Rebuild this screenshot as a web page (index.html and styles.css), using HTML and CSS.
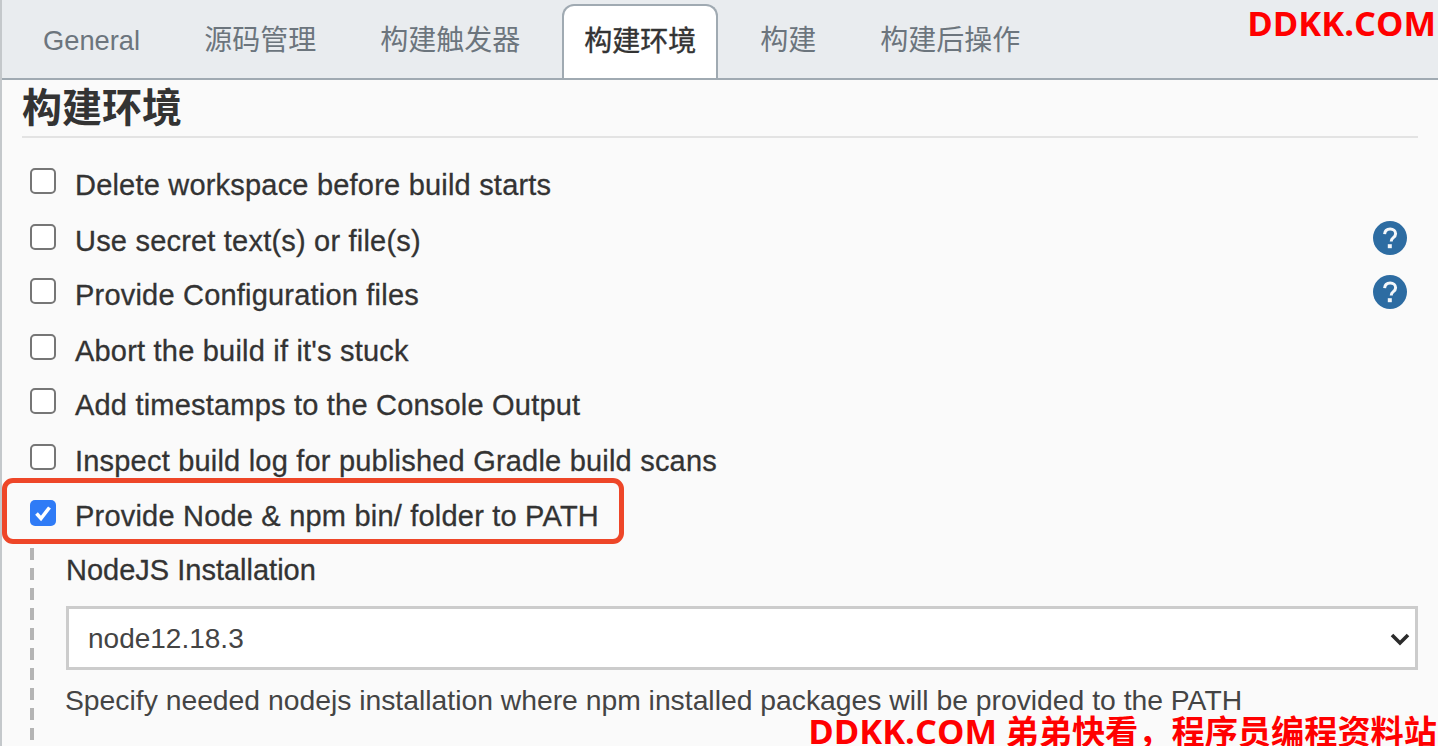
FILE: index.html
```html
<!DOCTYPE html>
<html lang="zh-CN">
<head>
    <meta charset="UTF-8">
    <title>构建环境</title>
    <link rel="stylesheet" href="styles.css">
</head>
<body>
    <div class="tabbar">
        <a class="tab tab-general">General</a>
        <a class="tab tab-scm">源码管理</a>
        <a class="tab tab-triggers">构建触发器</a>
        <a class="tab tab-active">构建环境</a>
        <a class="tab tab-build">构建</a>
        <a class="tab tab-post">构建后操作</a>
    </div>

    <div class="content">
        <h2 class="section-title">构建环境</h2>

        <div class="options">
            <label class="option"><input type="checkbox"><span>Delete workspace before build starts</span></label>
            <label class="option"><input type="checkbox"><span>Use secret text(s) or file(s)</span>
                <svg class="help" viewBox="0 0 34 34"><circle cx="17" cy="17" r="17" fill="#2d6ca2"/><path d="M11.6 13.2c.2-3.4 2.400-5.200 5.600-5.200 3.200 0 5.400 1.900 5.400 4.700 0 2-1 3.100-2.500 4.200-1.300 1-1.800 1.600-1.800 3v.6" fill="none" stroke="#f4f7fa" stroke-width="3"/><rect x="14.800" y="23.200" width="4" height="4" fill="#f4f7fa"/></svg>
            </label>
            <label class="option"><input type="checkbox"><span>Provide Configuration files</span>
                <svg class="help" viewBox="0 0 34 34"><circle cx="17" cy="17" r="17" fill="#2d6ca2"/><path d="M11.6 13.2c.2-3.4 2.400-5.200 5.600-5.200 3.200 0 5.400 1.900 5.400 4.700 0 2-1 3.100-2.500 4.200-1.300 1-1.800 1.600-1.800 3v.6" fill="none" stroke="#f4f7fa" stroke-width="3"/><rect x="14.800" y="23.200" width="4" height="4" fill="#f4f7fa"/></svg>
            </label>
            <label class="option"><input type="checkbox"><span>Abort the build if it's stuck</span></label>
            <label class="option"><input type="checkbox"><span>Add timestamps to the Console Output</span></label>
            <label class="option"><input type="checkbox"><span>Inspect build log for published Gradle build scans</span></label>
            <label class="option option-checked">
                <span class="checked-box"><svg viewBox="0 0 26 26"><path d="M6.500 13.500l4.500 5 8.500-11" fill="none" stroke="#fff" stroke-width="3.600"/></svg></span>
                <span>Provide Node &amp; npm bin/ folder to PATH</span>
                <span class="highlight"></span>
            </label>
        </div>

        <div class="nested">
            <div class="field-label">NodeJS Installation</div>
            <div class="select-wrap">
                <select class="field-select"><option>node12.18.3</option></select>
                <svg class="chevron" viewBox="0 0 20 14"><path d="M2 3l8 8 8-8" fill="none" stroke="#2b2b2b" stroke-width="3.600"/></svg>
            </div>
            <div class="field-help">Specify needed nodejs installation where npm installed packages will be provided to the PATH</div>
        </div>
    </div>

    <div class="watermark watermark-top">DDKK.COM</div>
    <div class="watermark watermark-bottom"><span class="watermark-latin">DDKK.COM</span> 弟弟快看，程序员编程资料站</div>
</body>
</html>
```

FILE: styles.css
```css
html, body {
    margin: 0;
    height: 100%;
    overflow: hidden;
}
body {
    position: relative;
    box-sizing: border-box;
    border-left: 2px solid #c4c8cb;
    background-color: #fafafa;
    color: #333;
    font-family: "Liberation Sans", "Noto Sans CJK SC", sans-serif;
}
.tabbar {
    display: flex;
    align-items: flex-end;
    box-sizing: border-box;
    height: 80px;
    padding-left: 41px;
    background-color: #e9ecef;
    border-bottom: 2px solid #a0aab2;
}
.tab {
    font-size: 28px;
    line-height: 74px;
    color: #6c757d;
}
.tab-general {
    margin-right: 64px;
    font-size: 27.300px;
}
.tab-scm { margin-right: 64px; }
.tab-triggers { margin-right: 42px; }
.tab-active {
    box-sizing: border-box;
    width: 156px;
    height: 74px;
    padding-left: 20px;
    line-height: 72px;
    color: #333;
    background-color: #fff;
    border: 2px solid #a0aab2;
    border-bottom: none;
    border-radius: 12px 12px 0 0;
    -webkit-text-stroke: 0.4px currentColor;
}
.tab-build { margin: 0 64px 0 42px; }
.content {
    padding: 0 20px;
}
.section-title {
    box-sizing: border-box;
    margin: 0;
    height: 58px;
    font-size: 40px;
    line-height: 56px;
    font-weight: 700;
    border-bottom: 2px solid #e3e3e3;
}
.options {
    padding-top: 20px;
}
.option {
    position: relative;
    display: flex;
    align-items: center;
    height: 55px;
    padding-left: 8px;
    font-size: 29px;
    letter-spacing: 0.2px;
    -webkit-text-stroke: 0.3px currentColor;
}
.option:nth-child(even) {
    margin: 1px 0 -1px;
}
.option-checked {
    margin-top: 1px;
}
.option input {
    appearance: none;
    box-sizing: border-box;
    width: 26px;
    height: 26px;
    margin: 0 19px 9px 0;
    background-color: #fff;
    border: 2px solid #767676;
    border-radius: 5px;
}
.checked-box {
    box-sizing: border-box;
    width: 26px;
    height: 26px;
    margin: 0 19px 8px 0;
    background-color: #2f7bf6;
    border-radius: 5px;
}
.checked-box svg {
    display: block;
}
.help {
    position: absolute;
    right: 11px;
    top: 7px;
    width: 34px;
    height: 34px;
}
.highlight {
    position: absolute;
    left: -20px;
    top: -11px;
    width: 622px;
    height: 66px;
    box-sizing: border-box;
    border: 5px solid #ee4628;
    border-radius: 11px;
}
.nested {
    margin: 4px 0 0 8px;
    padding-left: 36px;
    padding-bottom: 60px;
    background: repeating-linear-gradient(to bottom, #b4b4b4 0, #b4b4b4 12px, transparent 12px, transparent 20px) left top / 4px 100% no-repeat;
}
.field-label {
    height: 58px;
    font-size: 29px;
    line-height: 44px;
    -webkit-text-stroke: 0.3px currentColor;
}
.select-wrap {
    position: relative;
}
.field-select {
    appearance: none;
    display: block;
    box-sizing: border-box;
    width: 100%;
    height: 64px;
    padding: 0 19px;
    background-color: #fff;
    border: 3px solid #ccc;
    border-radius: 0;
    color: #444;
    font-family: inherit;
    font-size: 28px;
}
.chevron {
    position: absolute;
    right: 8px;
    top: 26px;
    width: 20px;
    height: 14px;
}
.field-help {
    margin: 15px 0 0 -1px;
    font-size: 28.300px;
    line-height: 30px;
    color: #444;
    white-space: nowrap;
}
.watermark {
    position: absolute;
    color: #ff0000;
    font-family: "Open Sans", "Noto Sans CJK SC", sans-serif;
    font-weight: 700;
    white-space: nowrap;
}
.watermark-top {
    top: 1px;
    right: 2px;
    font-size: 34.500px;
    line-height: 44px;
}
.watermark-bottom {
    top: 716px;
    right: 1px;
    font-size: 33.200px;
    line-height: 30px;
}
.watermark-latin {
    font-size: 34.500px;
}
```
